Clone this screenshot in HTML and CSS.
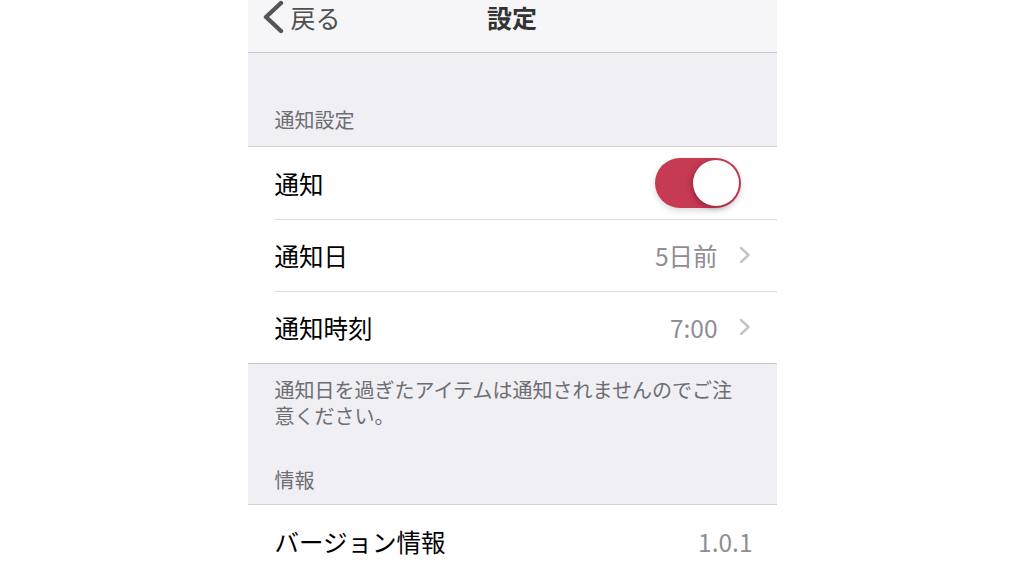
FILE: index.html
```html
<!DOCTYPE html>
<html lang="ja">
<head>
    <meta charset="UTF-8">
    <meta name="viewport" content="width=device-width, initial-scale=1.0">
    <title>設定</title>
    <link rel="stylesheet" href="styles.css">
</head>
<body>

    <div class="screen">
        <!-- Navigation bar -->
        <div class="navbar">
            <div class="nav-back">
                <svg class="back-icon" width="24" height="34" viewBox="0 0 24 34">
                    <path d="M20 3 L5 17 L20 31" fill="none" stroke="#555" stroke-width="4.4" stroke-linecap="round" stroke-linejoin="round"/>
                </svg>
                <span>戻る</span>
            </div>
            <div class="nav-title">設定</div>
            <div></div>
        </div>

        <!-- Notification settings -->
        <div class="section-header first">通知設定</div>
        <div class="group">
            <div class="row">
                <span class="label">通知</span>
                <div class="toggle on"><div class="knob"></div></div>
            </div>
            <div class="row">
                <span class="label">通知日</span>
                <span class="value">5日前</span>
                <svg class="chevron" width="12" height="18" viewBox="0 0 12 18">
                    <path d="M2 2 L9.5 9 L2 16" fill="none" stroke="#c4c4c9" stroke-width="2.4" stroke-linecap="round" stroke-linejoin="round"/>
                </svg>
            </div>
            <div class="row">
                <span class="label">通知時刻</span>
                <span class="value">7:00</span>
                <svg class="chevron" width="12" height="18" viewBox="0 0 12 18">
                    <path d="M2 2 L9.5 9 L2 16" fill="none" stroke="#c4c4c9" stroke-width="2.4" stroke-linecap="round" stroke-linejoin="round"/>
                </svg>
            </div>
        </div>
        <div class="section-footer">通知日を過ぎたアイテムは通知されませんのでご注意ください。</div>

        <!-- Info -->
        <div class="section-header">情報</div>
        <div class="group">
            <div class="row">
                <span class="label">バージョン情報</span>
                <span class="value plain">1.0.1</span>
            </div>
        </div>
    </div>

</body>
</html>
```

FILE: styles.css
```css
/* Page */
body {
    margin: 0;
    background: #fff;
    font-family: "Noto Sans CJK JP", "Noto Sans", sans-serif;
    overflow: hidden;
}

/* Phone screen column */
.screen {
    width: 529px;
    height: 576px;
    margin: 0 auto;
    background: #efeff4;
}

/* Navigation bar (top cut off) */
.navbar {
    display: grid;
    grid-template-columns: 1fr auto 1fr;
    align-items: center;
    height: 53px;
    padding-bottom: 21px;
    background: #f6f6f8;
    border-bottom: 1px solid #c6c6ca;
    box-sizing: border-box;
}

.nav-back {
    display: flex;
    align-items: center;
    gap: 6px;
    padding-left: 13px;
    color: #4f4f4f;
    font-size: 25px;
    line-height: 30px;
}

.back-icon {
    display: block;
}

.nav-title {
    font-size: 25px;
    font-weight: bold;
    color: #333;
    line-height: 30px;
}

/* Section headers & footers */
.section-header {
    color: #6d6d72;
    font-size: 20px;
    line-height: 26px;
    padding: 38px 27px 11px;
}

.section-header.first {
    padding-top: 54px;
    padding-bottom: 13px;
}

.section-footer {
    color: #6d6d72;
    font-size: 20px;
    line-height: 26px;
    padding: 13px 27px 0;
}

/* Table groups */
.group {
    background: #fff;
    border-top: 1px solid #d2d2d6;
    border-bottom: 1px solid #c8c7cc;
}

.row {
    display: flex;
    align-items: center;
    height: 72px;
    padding-left: 27px;
    padding-right: 26px;
    position: relative;
}

.row + .row::before {
    content: "";
    position: absolute;
    top: 0;
    left: 27px;
    right: 0;
    border-top: 1px solid #dcdce0;
}

.label {
    flex: 1;
    color: #000;
    font-size: 24.5px;
}

.value {
    color: #8e8e93;
    font-size: 24.5px;
    margin-right: 21px;
}

.value.plain {
    margin-right: -2px;
}

.chevron {
    display: block;
}

/* Switch */
.toggle {
    width: 86px;
    height: 50px;
    border-radius: 25px;
    background: #c63a53;
    margin-right: 10px;
    display: flex;
    align-items: center;
    justify-content: flex-end;
    padding: 2px;
    box-sizing: border-box;
    box-shadow: 0 3px 6px rgba(0, 0, 0, 0.15);
}

.knob {
    width: 46px;
    height: 46px;
    border-radius: 50%;
    background: #fff;
    box-shadow: -2px 2px 5px rgba(80, 0, 20, 0.35);
}
```
